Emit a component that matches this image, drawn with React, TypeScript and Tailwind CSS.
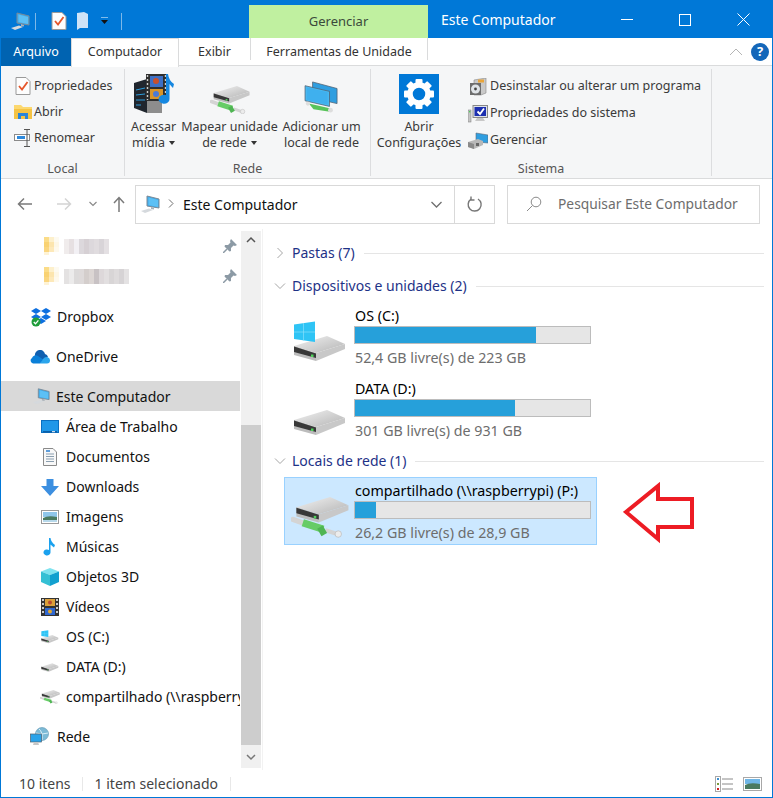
import React from "react";

const Pc = ({ s = 18 }: { s?: number }) => (
  <svg width={s} height={s} viewBox="0 0 20 20" className="shrink-0">
    <path d="M7 2 L19 5 V14 L7 12 Z" fill="#3fa9e8" stroke="#7c8a96" strokeWidth="1" />
    <path d="M8.5 3.5 L18 6 V13 L8.5 11 Z" fill="#5cc0f5" />
    <path d="M11 13 L11 15 L14 15.5 L14 14 Z" fill="#a8b0b8" />
    <path d="M1 17 L9 14.5 L13 16 L5 19 Z" fill="#d5d9dd" />
  </svg>
);

const Hdd = ({ w = 52, net = false, win = false }: { w?: number; net?: boolean; win?: boolean }) => (
  <svg width={w} height={(w * (win ? 42 : net ? 38 : 27)) / 54} viewBox={win ? "0 0 54 42" : net ? "0 0 54 38" : "0 0 54 27"} className="shrink-0">
    <defs>
      <linearGradient id="hddtop" x1="0" y1="0" x2="1" y2="1">
        <stop offset="0" stopColor="#f2f2f2" />
        <stop offset="1" stopColor="#b4b4b4" />
      </linearGradient>
    </defs>
    {net && <path d="M2 21 L12 24.5" stroke="#d4d4d4" strokeWidth="5" strokeLinecap="round" />}
    <g transform={win ? "translate(1,15)" : net ? "translate(5,0) scale(.95)" : "translate(1,1)"}>
      <path d="M0 10 L33 0 L51 8 L22 17 Z" fill="url(#hddtop)" />
      <path d="M22 17 L51 8 V13 L22 25 Z" fill="#c8c8c8" />
      <path d="M0 10 L22 17 V25 L0 19 Z" fill="#bcbcbc" />
      <path d="M0 10.5 L22 17.5 V22 L0 16 Z" fill="#383838" />
      <rect x="17" y="18.5" width="2.5" height="2.5" fill="#4ed05a" />
    </g>
    {win && (
      <g>
        <path d="M1 3.5 L22 0.5 V21 L1 18 Z" fill="#2fc4f5" />
        <path d="M10.5 2 V19.5 M1 11 H22" stroke="#86dffb" strokeWidth="0.7" />
      </g>
    )}
    {net && (
      <g>
        <path d="M32 31 L43 34.5" stroke="#d4d4d4" strokeWidth="4" />
        <circle cx="44" cy="34.5" r="3" fill="#ececec" stroke="#b5b5b5" strokeWidth="0.6" />
        <path d="M11 24 L30 30" stroke="#66cc66" strokeWidth="7" />
        <path d="M27 28 L31 35" stroke="#4fb553" strokeWidth="6" />
      </g>
    )}
  </svg>
);

const Props = () => (
  <svg width="16" height="18" viewBox="0 0 16 18" className="shrink-0">
    <path d="M1 .5 H11 L15 4.5 V17.5 H1 Z" fill="#fdfdfd" stroke="#9a9a9a" />
    <path d="M4 9 L7 12.5 L12.5 5" fill="none" stroke="#e5552a" strokeWidth="1.8" />
  </svg>
);

const FolderOpen = () => (
  <svg width="18" height="16" viewBox="0 0 18 16" className="shrink-0">
    <path d="M0 1 H7 L9 3 H18 V15 H0 Z" fill="#fcd86f" />
    <path d="M0 5 H18 V15 H0 Z" fill="#f5c343" />
    <path d="M4 15 V9 H14 V15 H11 V12 H7 V15 Z" fill="#2a84d8" />
  </svg>
);

const Rename = () => (
  <svg width="18" height="18" viewBox="0 0 18 18" className="shrink-0">
    <rect x="0.5" y="5.5" width="15" height="6" fill="#fff" stroke="#8a8a8a" />
    <rect x="3" y="7" width="8" height="3" fill="#2d89dc" />
    <path d="M10 .5 H16 M13 .5 V17.5 M10 17.5 H16" stroke="#555" fill="none" />
  </svg>
);

const Media = () => (
  <svg width="42" height="40" viewBox="0 0 42 40" className="shrink-0">
    <path d="M1 9 L14 5 V39 L1 34 Z" fill="#20262e" />
    <path d="M14 5 L29 9 V39 H14 Z" fill="#8d8d8d" />
    <path d="M3 16 L12 14 M3 21 L12 20 M3 26 L12 26 M3 31 L8 31" stroke="#2d9cdb" strokeWidth="1" />
    <rect x="13" y="0" width="21" height="27" fill="#2e2e2e" />
    <path d="M14.5 1 V26 M32.5 1 V26" stroke="#cfcfcf" strokeWidth="1.4" strokeDasharray="2 2" />
    <rect x="17" y="2" width="13" height="11" fill="#3d6fc4" />
    <rect x="17" y="15" width="13" height="10" fill="#d9952a" />
    <circle cx="23" cy="7" r="3" fill="#c94f2c" />
    <circle cx="23" cy="20" r="3" fill="#4a7ad8" />
    <path d="M35 0 Q36 7 41 10 L40 14 Q38 12 36.5 10 V25 A5.5 4.5 0 1 1 33 21 V0 Z" fill="#1687e0" />
  </svg>
);

const AddNet = () => (
  <svg width="36" height="32" viewBox="0 0 38 34" className="shrink-0">
    <path d="M9 1 L35 8 V24 L9 18 Z" fill="#2f9ee0" stroke="#506070" strokeWidth="0.8" />
    <path d="M1 5 L27 11 V27 L1 21 Z" fill="#49b8f0" stroke="#506070" strokeWidth="0.8" />
    <path d="M3 7 L25 12 V25 L3 20 Z" fill="#3fb0ee" />
    <path d="M5 24 L27 29 L29 33 L10 30 Z" fill="#58c35a" />
    <circle cx="4" cy="24" r="2.2" fill="#ddd" />
    <circle cx="28" cy="31" r="2.6" fill="#ddd" />
  </svg>
);

const Gear = () => (
  <div className="w-10 h-10 bg-[#0078d7] flex items-center justify-center shrink-0">
    <svg width="32" height="32" viewBox="0 0 32 32">
      <g fill="#fff">
        {[0, 45, 90, 135, 180, 225, 270, 315].map((a) => (
          <rect key={a} x="12.5" y="1" width="7" height="8" rx="1" transform={`rotate(${a} 16 16)`} />
        ))}
      </g>
      <circle cx="16" cy="16" r="9" fill="none" stroke="#fff" strokeWidth="5.5" />
    </svg>
  </div>
);

const Uninstall = () => (
  <svg width="18" height="18" viewBox="0 0 18 18" className="shrink-0">
    <path d="M5 2 L17 0 V15 L12 17 H5 Z" fill="#c9c9c9" stroke="#888" strokeWidth="0.6" />
    <rect x="1" y="5" width="11" height="12" fill="#6d6d6d" />
    <circle cx="6.5" cy="11" r="4.5" fill="#e0e4e8" />
    <circle cx="6.5" cy="11" r="1.4" fill="#444" />
    <rect x="9" y="1.5" width="6" height="3" fill="#e9a53a" />
  </svg>
);

const SysProps = () => (
  <svg width="20" height="18" viewBox="0 0 20 18" className="shrink-0">
    <rect x="5" y="0.5" width="14.5" height="12" fill="#dfe3e8" stroke="#888" />
    <rect x="6.5" y="2" width="11.5" height="9" fill="#1c2fb0" />
    <path d="M9.5 6.5 L12 9 L16 3.5" fill="none" stroke="#fff" strokeWidth="1.8" />
    <rect x="0" y="5" width="3" height="12" fill="#c5c5c5" stroke="#7a7a7a" strokeWidth="0.5" />
    <rect x="1" y="6" width="1.4" height="1.4" fill="#4ed05a" />
    <path d="M9 13 H15 L17 16 H7 Z" fill="#c8c8c8" />
  </svg>
);

const Manage = () => (
  <svg width="20" height="18" viewBox="0 0 20 18" className="shrink-0">
    <path d="M8 1 L20 3 V11 L8 10 Z" fill="#2f9ee0" stroke="#5a6a78" strokeWidth="0.6" />
    <path d="M0 10 L10 7 L15 9 V13 L6 17 L0 15 Z" fill="#b8b8b8" />
    <path d="M0 10 L6 12 V17 L0 15 Z" fill="#8a8a8a" />
    <rect x="8" y="11" width="3" height="3" fill="#666" />
  </svg>
);

const Pin = () => (
  <svg width="14" height="14" viewBox="0 0 14 14" className="shrink-0">
    <path d="M8 0 L14 6 L12 7 L10.5 6.5 L8 9 L8 12 L6.5 12.5 L1.5 7.5 L2 6 L5 6 L7.5 3.5 L7 2 Z" fill="#8c9aa5" />
    <path d="M4 10 L0 14" stroke="#8c9aa5" strokeWidth="1.5" />
  </svg>
);

const Blurred = ({ cells }: { cells: string[] }) => (
  <div className="flex h-[15px] items-stretch">
    {cells.map((c, i) => (
      <span key={i} className="w-[5px]" style={{ background: c }} />
    ))}
  </div>
);

const FolderBlur = () => (
  <div className="flex flex-col w-[15px] h-[18px] shrink-0">
    <div className="flex h-[5px]"><span className="w-[5px] bg-[#fbdc88]" /><span className="w-[5px] bg-[#fdf0cc]" /><span className="w-[5px] bg-[#fdfaf0]" /></div>
    <div className="flex h-[5px]"><span className="w-[5px] bg-[#f9d272]" /><span className="w-[5px] bg-[#fce5ae]" /><span className="w-[5px] bg-[#fdf7e6]" /></div>
    <div className="flex h-[5px]"><span className="w-[5px] bg-[#fad680]" /><span className="w-[5px] bg-[#fde9ba]" /><span className="w-[5px] bg-[#fef9ec]" /></div>
    <div className="flex h-[3px]"><span className="w-[5px] bg-[#fef3d6]" /></div>
  </div>
);

const Dropbox = () => (
  <svg width="20" height="19" viewBox="0 0 20 19" className="shrink-0">
    <g fill="#0d6fe0">
      <path d="M5 0 L10 3 L5 6 L0 3 Z" />
      <path d="M15 0 L20 3 L15 6 L10 3 Z" />
      <path d="M5 6 L10 9 L5 12 L0 9 Z" />
      <path d="M15 6 L20 9 L15 12 L10 9 Z" />
      <path d="M10 10 L15 13 L10 16 L5 13 Z" />
    </g>
    <circle cx="5" cy="14" r="4.5" fill="#1f9d3a" />
    <path d="M2.8 14 L4.5 15.8 L7.4 12.4" stroke="#fff" strokeWidth="1.3" fill="none" />
  </svg>
);

const OneDrive = () => (
  <svg width="20" height="14" viewBox="0 0 20 14" className="shrink-0">
    <path d="M5 6 A5 5 0 0 1 15 4 A4 4 0 0 1 18 7 L9 11 Z" fill="#0f5fb0" />
    <path d="M3 13.5 A3 3 0 0 1 2 8 A4 4 0 0 1 8 6 L14 10 L10 13.5 Z" fill="#0a7fd8" />
    <path d="M10 13.5 L14 8 A3.5 3.5 0 0 1 20 10.5 A3 3 0 0 1 17 13.5 Z" fill="#2ba5ec" />
  </svg>
);

const Desktop = () => (
  <svg width="18" height="14" viewBox="0 0 18 14" className="shrink-0">
    <rect x="0.5" y="0.5" width="17" height="12" fill="#1f97e8" stroke="#0a6fc0" />
    <rect x="2" y="11" width="14" height="1.5" fill="#0a5fa8" />
    <rect x="11" y="11.2" width="3" height="1" fill="#fff" />
  </svg>
);

const Docs = () => (
  <svg width="14" height="18" viewBox="0 0 14 18" className="shrink-0">
    <path d="M.5 .5 H10 L13.5 4 V17.5 H.5 Z" fill="#f8f8f8" stroke="#8a8a8a" />
    <path d="M3 6 H11 M3 8.5 H11 M3 11 H11 M3 13.5 H11" stroke="#8b9fb0" />
    <path d="M3 3 H7" stroke="#2b7fd0" strokeWidth="1.5" />
  </svg>
);

const Down = () => (
  <svg width="18" height="17" viewBox="0 0 18 17" className="shrink-0">
    <path d="M5.5 0 H12.5 V7 H18 L9 17 L0 7 H5.5 Z" fill="#3c8fe0" />
  </svg>
);

const Pics = () => (
  <svg width="18" height="14" viewBox="0 0 18 14" className="shrink-0">
    <rect x="0.5" y="0.5" width="17" height="13" fill="#fff" stroke="#9a9a9a" />
    <rect x="2" y="2" width="14" height="5" fill="#8fc6ea" />
    <path d="M2 8 Q7 5 16 7 V12 H2 Z" fill="#4a7a60" />
    <rect x="2" y="10" width="14" height="2" fill="#b6d8ea" />
  </svg>
);

const Note = () => (
  <svg width="14" height="18" viewBox="0 0 14 18" className="shrink-0">
    <path d="M6 0 H7.5 Q8 4 12 7 L11 9.5 Q9 8 7.5 6.5 V14.5 A3.5 3 0 1 1 6 12 Z" fill="#1aa1ee" />
  </svg>
);

const Cube = () => (
  <svg width="18" height="18" viewBox="0 0 18 18" className="shrink-0">
    <path d="M9 0 L18 3.5 L9 7 L0 3.5 Z" fill="#7fe3ef" />
    <path d="M0 3.5 L9 7 V18 L0 14 Z" fill="#35c0d4" />
    <path d="M18 3.5 L9 7 V18 L18 14 Z" fill="#12a0cf" />
  </svg>
);

const Film = () => (
  <svg width="18" height="18" viewBox="0 0 18 18" className="shrink-0">
    <rect width="18" height="18" fill="#333" />
    <rect x="1" y="1" width="2" height="2" fill="#ccc" /><rect x="1" y="5" width="2" height="2" fill="#ccc" /><rect x="1" y="9" width="2" height="2" fill="#ccc" /><rect x="1" y="13" width="2" height="2" fill="#ccc" />
    <rect x="15" y="1" width="2" height="2" fill="#ccc" /><rect x="15" y="5" width="2" height="2" fill="#ccc" /><rect x="15" y="9" width="2" height="2" fill="#ccc" /><rect x="15" y="13" width="2" height="2" fill="#ccc" />
    <rect x="4" y="1" width="10" height="7" fill="#d9a03a" />
    <rect x="4" y="10" width="10" height="7" fill="#3068d0" />
    <circle cx="9" cy="4.5" r="2" fill="#b94a30" />
    <circle cx="9" cy="13.5" r="2" fill="#e2a92f" />
  </svg>
);

const Net = () => (
  <svg width="20" height="20" viewBox="0 0 20 20" className="shrink-0">
    <circle cx="12" cy="7" r="6.5" fill="#7cbad6" stroke="#5a93b0" strokeWidth="0.6" />
    <path d="M9 2 Q13 5 12 13 M6 6 Q12 8 18 6" stroke="#d9eef7" fill="none" />
    <rect x="0.5" y="7" width="11" height="8" fill="#2aa3ea" stroke="#50616e" strokeWidth="0.7" />
    <path d="M4 15 H8 L9 18 H3 Z" fill="#c6c6c6" />
  </svg>
);

const Row = ({ icon, label, indent = 40, active = false, gap = 7 }: { icon: React.ReactNode; label: string; indent?: number; active?: boolean; gap?: number }) => (
  <div className={`h-[30px] flex items-center whitespace-nowrap overflow-hidden text-[14px] text-[#111] ${active ? "bg-[#d9d9d9]" : ""}`} style={{ paddingLeft: indent, gap }}>
    <span className="w-[18px] flex justify-center shrink-0">{icon}</span>
    <span className={active ? "" : "pb-[2px]"}>{label}</span>
  </div>
);

const Small = ({ icon, label }: { icon: React.ReactNode; label: string }) => (
  <div className="h-[26px] flex items-center whitespace-nowrap">
    <span className="w-[21px] mr-[1px] flex justify-center shrink-0">{icon}</span>
    <span>{label}</span>
  </div>
);

const Big = ({ icon, a, b, caret = false, w }: { icon: React.ReactNode; a: string; b: string; caret?: boolean; w: string }) => (
  <div className={`flex flex-col items-center leading-[16px] text-center whitespace-nowrap pt-[3px] ${w}`}>
    <div className="h-[44px] flex items-center justify-center">{icon}</div>
    <div className="mt-[3px]">{a}</div>
    <div className="flex items-center gap-[4px]">
      {b}
      {caret && <span className="w-0 h-0 border-l-[3.5px] border-r-[3.5px] border-t-[4px] border-l-transparent border-r-transparent border-t-[#333]" />}
    </div>
  </div>
);

const Group = ({ title, w, children }: { title: string; w: string; children: React.ReactNode }) => (
  <div className={`h-full flex flex-col border-r border-[#dcdddf] shrink-0 ${w}`}>
    <div className="flex-1 min-h-0">{children}</div>
    <div className="h-[21px] pt-[5px] text-center text-[#555] leading-[18px]">{title}</div>
  </div>
);

const Header = ({ title, open, mt }: { title: string; open: boolean; mt: string }) => (
  <div className={`h-[20px] flex items-center ${mt}`}>
    <svg width="12" height="12" viewBox="0 0 12 12" className="ml-[11px] mr-[6px] shrink-0">
      {open ? <path d="M1 3.5 L6 8.5 L11 3.5" fill="none" stroke="#a6a6a6" /> : <path d="M3.5 1 L8.5 6 L3.5 11" fill="none" stroke="#a6a6a6" />}
    </svg>
    <span className="text-[#1e3287] text-[14px] whitespace-nowrap pb-[2px]">{title}</span>
    <div className="flex-1 h-px bg-[#e5e5e5] ml-[9px]" />
  </div>
);

const Tile = ({ icon, name, pct, info, selected = false }: { icon: React.ReactNode; name: string; pct: number; info: string; selected?: boolean }) => (
  <div className={`relative w-[313px] h-[68px] ml-[21px] border flex ${selected ? "bg-[#cce8ff] border-[#99d1ff]" : "border-transparent"}`}>
    <div className="w-[69px] shrink-0 flex items-end justify-center pb-[6px]">{icon}</div>
    <div className="flex-1 pr-[5px]">
      <div className="h-[23px] pl-px flex items-center text-[14.25px] text-black leading-none whitespace-nowrap pt-[4px]">{name}</div>
      <div className="h-[18px] bg-[#e6e6e6] border border-[#bcbcbc]">
        <div className="h-full bg-[#26a0da]" style={{ width: `${pct}%` }} />
      </div>
      <div className="h-[24px] pl-px flex items-center text-[14.25px] text-[#6d6d6d] whitespace-nowrap pt-[3px]">{info}</div>
    </div>
  </div>
);

export default function App() {
  return (
    <div className="w-[773px] h-[798px] bg-white flex flex-col border-x border-b border-[#0078d7] overflow-hidden relative text-[#1a1a1a]" style={{ fontFamily: '"Noto Sans", "Open Sans", sans-serif' }}>
      {/* title bar */}
      <div className="h-[38px] bg-[#0078d7] flex shrink-0 relative">
        <div className="w-[248px] flex items-center pl-[9px] pt-[4px] shrink-0">
          <Pc s={20} />
          <span className="w-px h-[17px] bg-[#7db8e8] ml-[5px]" />
          <span className="ml-[15px] flex"><Props /></span>
          <svg width="13" height="18" viewBox="0 0 13 18" className="ml-[9px]"><path d="M1 1 L8 0 L12 2 V16 H4 L1 18 Z" fill="#cfe3f7" /></svg>
          <svg width="9" height="8" viewBox="0 0 9 8" className="ml-[11px]"><path d="M1 0 H8" stroke="#fff" /><path d="M1 3 H8 L4.5 7 Z" fill="#111" /></svg>
          <span className="w-px h-[17px] bg-[#7db8e8] ml-[12px]" />
        </div>
        <div className="w-[179px] mt-[5px] pt-[1px] bg-[#c0f0a0] flex items-center justify-center text-[13px] text-[#3b4a3b]">Gerenciar</div>
        <div className="ml-[13px] text-white text-[14px] leading-[38px] pt-[1px]">Este Computador</div>
        <div className="flex-1" />
        <div className="flex items-center pt-[1px]">
          <div className="w-[58px] flex justify-center"><span className="w-[12px] h-px bg-white" /></div>
          <div className="w-[58px] flex justify-center"><span className="w-[12px] h-[12px] border border-white" /></div>
          <div className="w-[58px] flex justify-center">
            <svg width="13" height="13" viewBox="0 0 13 13"><path d="M.5 .5 L12.5 12.5 M12.5 .5 L.5 12.5" stroke="#fff" /></svg>
          </div>
        </div>
      </div>
      {/* tabs */}
      <div className="h-[28px] flex shrink-0 text-[12.5px] items-stretch">
        <div className="w-[70px] bg-[#0063b1] text-white flex items-center justify-center">Arquivo</div>
        <div className="w-[108px] border-x border-t border-[#dadbdc] flex items-center justify-center bg-white -mb-px relative text-[#333] pb-[2px]">Computador</div>
        <div className="w-[71px] flex items-center justify-center border-b border-[#dadbdc] text-[#333] pt-[1px]">Exibir</div>
        <div className="w-[178px] flex items-center justify-center border-b border-[#dadbdc] text-[#333] relative pt-[1px]">
          <span className="absolute left-0 top-0 h-[22px] w-px bg-[#dadbdc]" />
          <span className="absolute right-0 top-0 h-[22px] w-px bg-[#dadbdc]" />
          Ferramentas de Unidade
        </div>
        <div className="flex-1 border-b border-[#dadbdc] flex items-center justify-end pr-[3px] gap-[8px]">
          <svg width="14" height="8" viewBox="0 0 14 8"><path d="M1 7 L7 1 L13 7" fill="none" stroke="#b5b5b5" /></svg>
          <span className="w-[18px] h-[18px] rounded-full bg-[#1467b9] text-white text-[13px] font-bold flex items-center justify-center">?</span>
        </div>
      </div>
      {/* ribbon */}
      <div className="h-[113px] bg-[#f5f6f7] border-b border-[#dadbdc] shrink-0 flex text-[12.5px] text-[#3a3a3a] pt-[3px] pb-[2px]">
        <Group title="Local" w="w-[124px]">
          <div className="pl-[11px] pt-[4px]">
            <Small icon={<Props />} label="Propriedades" />
            <Small icon={<FolderOpen />} label="Abrir" />
            <Small icon={<Rename />} label="Renomear" />
          </div>
        </Group>
        <Group title="Rede" w="w-[246px]">
          <div className="flex pl-[6px] gap-[5px]">
            <Big icon={<Media />} a="Acessar" b="mídia" caret w="w-[45px]" />
            <Big icon={<span className="pt-[12px]"><Hdd w={40} net /></span>} a="Mapear unidade" b="de rede" caret w="w-[97px]" />
            <Big icon={<span className="pt-[6px]"><AddNet /></span>} a="Adicionar um" b="local de rede" w="w-[77px]" />
          </div>
        </Group>
        <Group title="Sistema" w="w-[341px]">
          <div className="flex pl-[6px]">
            <Big icon={<Gear />} a="Abrir" b="Configurações" w="w-[84px]" />
            <div className="pl-[7px] pt-[4px]">
              <div className="h-[27px] flex items-center whitespace-nowrap gap-[3px]"><span className="w-[19px] flex justify-center"><Uninstall /></span>Desinstalar ou alterar um programa</div>
              <div className="h-[27px] flex items-center whitespace-nowrap gap-[3px]"><span className="w-[19px] flex justify-center"><SysProps /></span>Propriedades do sistema</div>
              <div className="h-[27px] flex items-center whitespace-nowrap gap-[3px]"><span className="w-[19px] flex justify-center"><Manage /></span>Gerenciar</div>
            </div>
          </div>
        </Group>
      </div>
      {/* address */}
      <div className="h-[50px] shrink-0 flex items-center pl-[16px]">
        <svg width="16" height="14" viewBox="0 0 16 14"><path d="M15 7 H2 M7 1.5 L1.5 7 L7 12.5" fill="none" stroke="#7a7a7a" strokeWidth="1.5" /></svg>
        <svg width="16" height="14" viewBox="0 0 16 14" className="ml-[23px]"><path d="M1 7 H14 M9 1.5 L14.5 7 L9 12.5" fill="none" stroke="#d4d4d4" strokeWidth="1.5" /></svg>
        <svg width="8" height="6" viewBox="0 0 8 6" className="ml-[17px]"><path d="M.5 1 L4 4.5 L7.5 1" fill="none" stroke="#8a8a8a" strokeWidth="1.2" /></svg>
        <svg width="12" height="16" viewBox="0 0 12 16" className="ml-[16px]"><path d="M6 16 V2 M1 7 L6 1.5 L11 7" fill="none" stroke="#7a7a7a" strokeWidth="1.5" /></svg>
        <div className="ml-[10px] w-[360px] h-[39px] border border-[#d9d9d9] flex items-center">
          <div className="flex-1 flex items-center pl-[4px] h-full">
            <Pc s={20} />
            <svg width="6" height="9" viewBox="0 0 6 9" className="ml-[8px] mb-[2px]"><path d="M1 .5 L5 4.5 L1 8.5" fill="none" stroke="#6f6f6f" /></svg>
            <span className="ml-[9px] text-[14px] text-[#111]">Este Computador</span>
            <div className="flex-1" />
            <svg width="11" height="7" viewBox="0 0 11 7" className="mr-[12px]"><path d="M.5 1 L5.5 6 L10.5 1" fill="none" stroke="#6f6f6f" strokeWidth="1.3" /></svg>
          </div>
          <div className="w-[40px] h-full border-l border-[#d9d9d9] flex items-center justify-center">
            <svg width="16" height="17" viewBox="0 0 16 17"><path d="M11 3 A6.5 6.5 0 1 1 4 3.2" fill="none" stroke="#777" strokeWidth="1.4" /><path d="M4 .5 V4 H7.5" fill="none" stroke="#777" strokeWidth="1.4" /></svg>
          </div>
        </div>
        <div className="ml-[12px] w-[253px] h-[39px] border border-[#d9d9d9] flex items-center pl-[18px]">
          <svg width="16" height="16" viewBox="0 0 16 16"><circle cx="10" cy="6" r="4.8" fill="none" stroke="#8a8a8a" /><path d="M6.5 9.5 L1 15" stroke="#8a8a8a" /></svg>
          <span className="ml-[16px] text-[13.8px] text-[#6d6d6d] whitespace-nowrap">Pesquisar Este Computador</span>
        </div>
      </div>
      {/* body */}
      <div className="flex-1 min-h-0 flex relative">
        <div className="w-[239px] shrink-0 pt-[2px] overflow-hidden">
          <div className="h-[30px] flex items-center pl-[43px] relative">
            <FolderBlur />
            <div className="ml-[5px]"><Blurred cells={["#f0ecec", "#e6e0e2", "#f2f0f4", "#dcd8dc", "#d6d0d4", "#dcd8dc", "#e0dcdf", "#d8d4d8", "#e4e0e3"]} /></div>
            <span className="absolute left-[222px] top-[8px]"><Pin /></span>
          </div>
          <div className="h-[30px] flex items-center pl-[43px] relative">
            <FolderBlur />
            <div className="ml-[5px]"><Blurred cells={["#e4e2e2", "#ecebeb", "#dcdada", "#dedada", "#d4cecc", "#dcd6d4", "#c8c2c4", "#ddd8da", "#e2dfe0", "#d8d5d6", "#dedbdc", "#d6d3d5", "#e4e2e3"]} /></div>
            <span className="absolute left-[222px] top-[8px]"><Pin /></span>
          </div>
          <div className="mt-[11px]"><Row icon={<Dropbox />} label="Dropbox" indent={31} gap={7} /></div>
          <div className="mt-[10px]"><Row icon={<OneDrive />} label="OneDrive" indent={30} gap={7} /></div>
          <div className="mt-[9px]"><Row icon={<Pc s={18} />} label="Este Computador" indent={31} active gap={6} /></div>
          <div className="mt-px">
            <Row icon={<Desktop />} label="Área de Trabalho" />
            <Row icon={<Docs />} label="Documentos" />
            <Row icon={<Down />} label="Downloads" />
            <Row icon={<Pics />} label="Imagens" />
            <Row icon={<Note />} label="Músicas" />
            <Row icon={<Cube />} label="Objetos 3D" />
            <Row icon={<Film />} label="Vídeos" />
            <Row icon={<Hdd w={18} win />} label="OS (C:)" />
            <Row icon={<Hdd w={18} />} label="DATA (D:)" />
            <Row icon={<Hdd w={20} net />} label="compartilhado (\\raspberrypi) (P:)" />
          </div>
          <div className="mt-[10px]"><Row icon={<Net />} label="Rede" indent={30} gap={8} /></div>
        </div>
        {/* scrollbar */}
        <div className="w-[20px] ml-px mt-[2px] mb-[2px] bg-[#f0f0f0] flex flex-col items-center shrink-0">
          <div className="h-[17px] flex items-center"><svg width="10" height="7" viewBox="0 0 10 7"><path d="M1 6 L5 2 L9 6" fill="none" stroke="#555" strokeWidth="1.5" /></svg></div>
          <div className="flex-1 w-full pt-[177px]"><div className="h-[320px] bg-[#cdcdcd] w-full" /></div>
          <div className="h-[22px] flex items-center"><svg width="10" height="7" viewBox="0 0 10 7"><path d="M1 1 L5 5 L9 1" fill="none" stroke="#777" strokeWidth="1.5" /></svg></div>
        </div>
        <div className="w-px ml-px bg-[#f2f2f2] shrink-0" />
        <div className="flex-1 pt-[14px] min-w-0">
          <div className="pr-[8px]">
            <Header title="Pastas (7)" open={false} mt="" />
            <Header title="Dispositivos e unidades (2)" open mt="mt-[13px]" />
          </div>
          <div className="mt-[6px] flex flex-col gap-[5px]">
            <Tile icon={<Hdd w={54} win />} name="OS (C:)" pct={77} info="52,4 GB livre(s) de 223 GB" />
            <Tile icon={<Hdd w={54} />} name="DATA (D:)" pct={68} info="301 GB livre(s) de 931 GB" />
          </div>
          <div className="pr-[8px]"><Header title="Locais de rede (1)" open mt="mt-[8px]" /></div>
          <div className="mt-[6px]">
            <Tile icon={<Hdd w={58} net />} name="compartilhado (\\raspberrypi) (P:)" pct={9} info="26,2 GB livre(s) de 28,9 GB" selected />
          </div>
        </div>
        {/* annotation arrow */}
        <svg width="76" height="62" viewBox="0 0 76 62" className="absolute left-[622px] top-[253px]">
          <path d="M3 30 L35 4 V17 H69 V45 H35 L35 57 Z" fill="#fff" stroke="#ed1c24" strokeWidth="4" />
        </svg>
      </div>
      {/* status */}
      <div className="h-[27px] shrink-0 flex items-center text-[14px] text-[#444] pl-[18px]">
        <span>10 itens</span>
        <span className="w-px h-[14px] bg-[#e8e8e8] ml-[11px]" />
        <span className="ml-[12px]">1 item selecionado</span>
        <span className="w-px h-[14px] bg-[#e8e8e8] ml-[12px]" />
        <div className="flex-1" />
        <svg width="19" height="16" viewBox="0 0 19 16">
          <rect x="0.5" y="0.5" width="5" height="15" fill="#fff" stroke="#a8a8a8" />
          <rect x="2" y="2" width="2" height="2" fill="#3b8fd0" /><rect x="2" y="7" width="2" height="2" fill="#7a9a3a" /><rect x="2" y="12" width="2" height="2" fill="#d02020" />
          <path d="M7 3 H18 M7 8 H18 M7 13 H18" stroke="#8a8a8a" />
        </svg>
        <svg width="19" height="14" viewBox="0 0 19 14" className="ml-[9px] mr-[10px]">
          <rect x="0.5" y="0.5" width="18" height="13" fill="#fff" stroke="#a8a8a8" />
          <rect x="2" y="2" width="15" height="5" fill="#6fb6e6" />
          <path d="M2 8 Q7 5 17 7 V12 H2 Z" fill="#4a7a60" />
        </svg>
      </div>
    </div>
  );
}
